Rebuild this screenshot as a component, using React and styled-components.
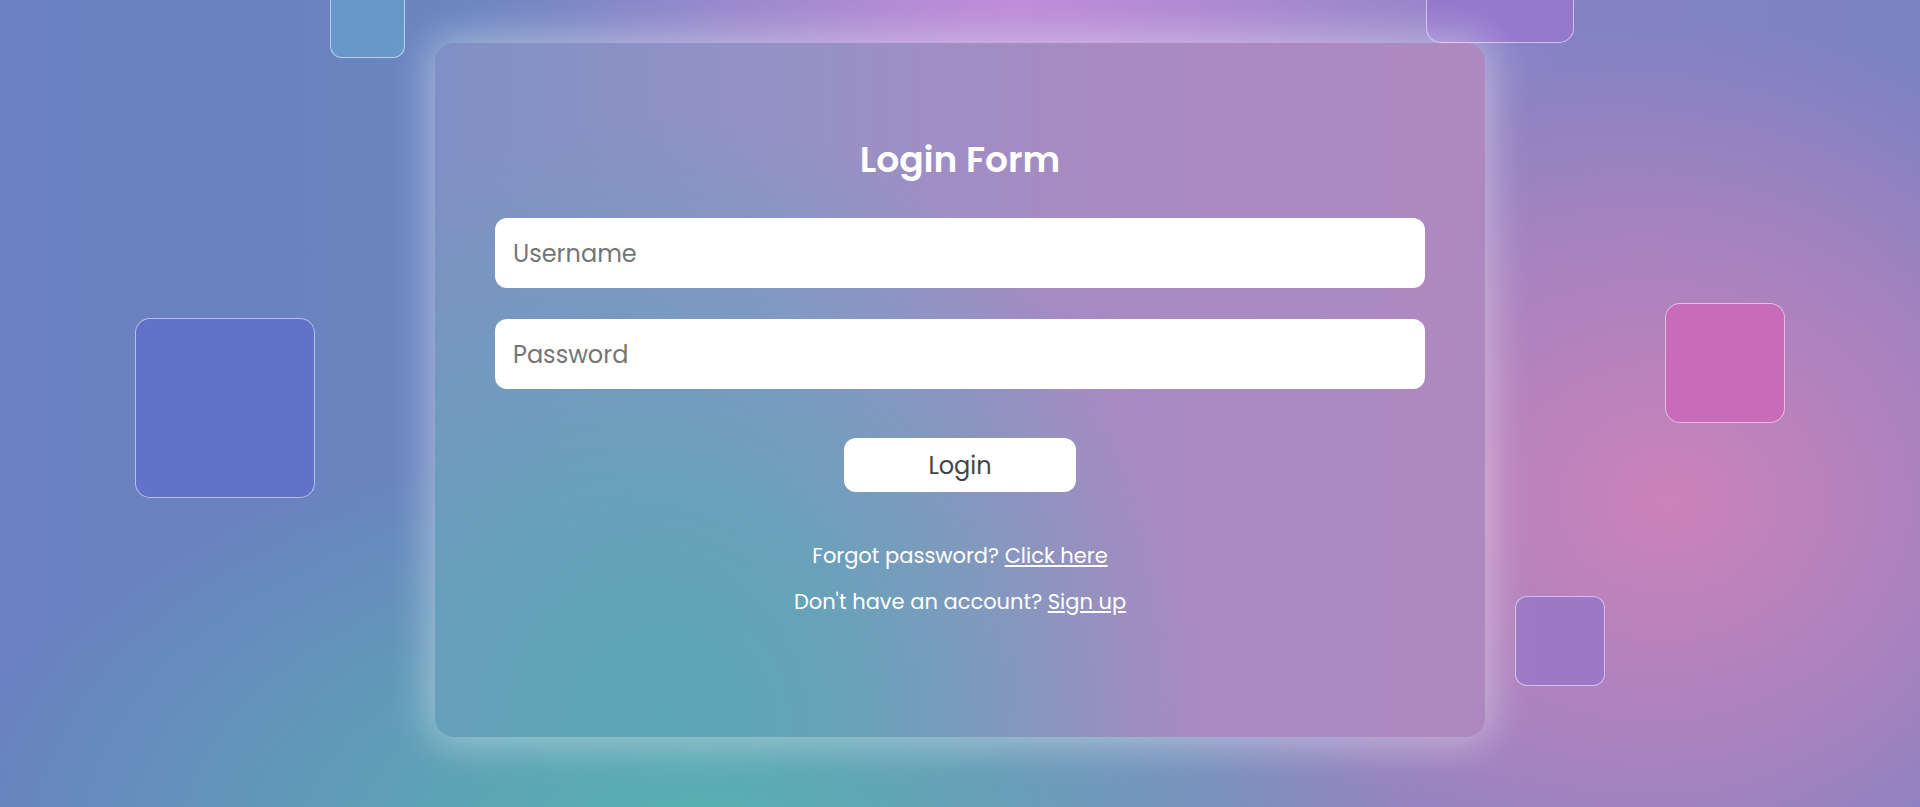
import React from "react";
import styled, { createGlobalStyle } from "styled-components";

const GlobalStyle = createGlobalStyle`
  * {
    box-sizing: border-box;
  }

  body {
    margin: 0;
    font-family: "Poppins", "Inter", "Open Sans", sans-serif;
    overflow: hidden;
  }
`;

const Page = styled.main`
  position: relative;
  display: flex;
  flex-flow: column nowrap;
  align-items: center;
  width: 100%;
  height: 100vh;
  padding-top: 43px;
  overflow: hidden;
  background:
    radial-gradient(ellipse 560px 240px at 53% 0%, rgba(196, 140, 218, 0.95), rgba(196, 140, 218, 0) 100%),
    radial-gradient(ellipse 560px 480px at 87% 62%, rgba(204, 130, 186, 1), rgba(204, 130, 186, 0.5) 55%, rgba(204, 130, 186, 0) 100%),
    radial-gradient(ellipse 760px 400px at 36% 104%, rgba(86, 178, 176, 1), rgba(86, 178, 176, 0) 100%),
    linear-gradient(90deg, #6a80c1 0%, #6a86bf 28%, #8a84c4 62%, #7c82c3 100%);
`;

const Square = styled.div`
  position: absolute;
  left: ${({ x }) => x}px;
  top: ${({ y }) => y}px;
  width: ${({ size }) => size}px;
  height: ${({ size }) => size}px;
  border-radius: ${({ size }) => (size > 100 ? 15 : 12)}px;
  border: 1px solid rgba(255, 255, 255, 0.55);
  background: ${({ color }) => color};
`;

const Card = styled.section`
  position: relative;
  display: flex;
  flex-flow: column nowrap;
  align-items: center;
  width: 1050px;
  height: 694px;
  padding: 95px 60px 0;
  border-radius: 20px;
  background:
    radial-gradient(
      ellipse 540px 620px at 22% 100%,
      rgba(92, 166, 182, 1) 0%,
      rgba(92, 166, 182, 0.85) 30%,
      rgba(92, 166, 182, 0.5) 60%,
      rgba(92, 166, 182, 0.28) 78%,
      rgba(92, 166, 182, 0) 100%
    ),
    linear-gradient(90deg, #8090c4 0%, #9692c6 35%, #a98ac2 65%, #ae89c0 100%);
  box-shadow: 0 0 40px 6px rgba(255, 255, 255, 0.42);
`;

const Title = styled.h1`
  margin: 0;
  color: #fff;
  font-size: 36px;
  font-weight: 600;
  line-height: 44px;
`;

const Fields = styled.div`
  display: flex;
  flex-flow: column nowrap;
  gap: 31px;
  width: 100%;
  margin-top: 36px;
`;

const Input = styled.input`
  width: 100%;
  height: 70px;
  padding: 0 18px;
  border: none;
  border-radius: 12px;
  background: #fff;
  color: #333;
  font-family: inherit;
  font-size: 24px;
  outline: none;

  ::placeholder {
    color: #6b6b6b;
  }
`;

const Button = styled.button`
  width: 232px;
  height: 54px;
  margin-top: 49px;
  border: none;
  border-radius: 12px;
  background: #fff;
  color: #444;
  font-family: inherit;
  font-size: 24px;
  cursor: pointer;
`;

const Links = styled.div`
  display: flex;
  flex-flow: column nowrap;
  align-items: center;
  gap: 20px;
  margin-top: 51px;
`;

const Note = styled.p`
  margin: 0;
  color: #fff;
  font-size: 21px;
  line-height: 26px;
`;

const TextLink = styled.a`
  color: #fff;
  text-decoration: underline;
  cursor: pointer;
`;

const squares = [
  { x: 330, y: -17, size: 75, color: "#6898cb" },
  { x: 1426, y: -105, size: 148, color: "#9479cc" },
  { x: 135, y: 318, size: 180, color: "#6272c8" },
  { x: 1665, y: 303, size: 120, color: "#c86bb8" },
  { x: 1515, y: 596, size: 90, color: "#9d78c6" },
];

function App() {
  return (
    <>
      <GlobalStyle />
      <Page>
        {squares.map((sq, i) => (
          <Square key={i} {...sq} />
        ))}
        <Card>
          <Title>Login Form</Title>
          <Fields>
            <Input type="text" placeholder="Username" />
            <Input type="password" placeholder="Password" />
          </Fields>
          <Button type="button">Login</Button>
          <Links>
            <Note>
              Forgot password? <TextLink>Click here</TextLink>
            </Note>
            <Note>
              Don't have an account? <TextLink>Sign up</TextLink>
            </Note>
          </Links>
        </Card>
      </Page>
    </>
  );
}

export default App;
